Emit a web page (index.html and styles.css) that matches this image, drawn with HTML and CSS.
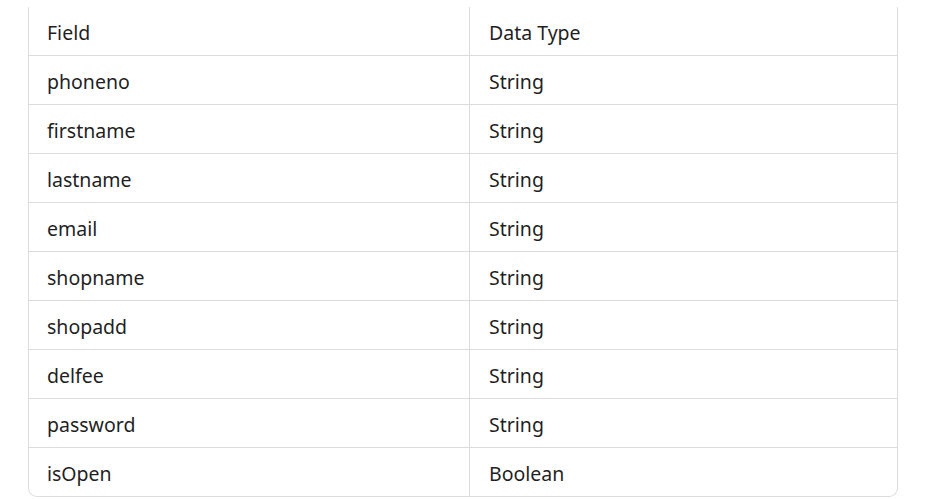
FILE: index.html
```html
<!DOCTYPE html>
<html>
<head>
<meta charset="utf-8">
<link rel="stylesheet" href="styles.css">
</head>
<body>
<div class="wrap">
<table class="tbl">
<thead>
<tr><th class="c1">Field</th><th>Data Type</th></tr>
</thead>
<tbody>
<tr><td class="c1">phoneno</td><td>String</td></tr>
<tr><td class="c1">firstname</td><td>String</td></tr>
<tr><td class="c1">lastname</td><td>String</td></tr>
<tr><td class="c1">email</td><td>String</td></tr>
<tr><td class="c1">shopname</td><td>String</td></tr>
<tr><td class="c1">shopadd</td><td>String</td></tr>
<tr><td class="c1">delfee</td><td>String</td></tr>
<tr><td class="c1">password</td><td>String</td></tr>
<tr><td class="c1">isOpen</td><td>Boolean</td></tr>
</tbody>
</table>
</div>
</body>
</html>
```
FILE: styles.css
```css
html, body {
  margin: 0;
  padding: 0;
  background: #ffffff;
}
body {
  padding: 7px 29px 0 28px;
  font-family: "Noto Sans", "Open Sans", sans-serif;
  color: #1f1f1f;
}
.wrap {
  border: 1px solid #dcdcdc;
  border-top: none;
  border-radius: 0 0 9px 9px;
  overflow: hidden;
}
.tbl {
  width: 100%;
  border-collapse: separate;
  border-spacing: 0;
  font-size: 19.5px;
}
.tbl th, .tbl td {
  height: 48px;
  padding: 3px 0 0 19px;
  text-align: left;
  font-weight: 400;
  vertical-align: middle;
  box-sizing: border-box;
}
.tbl td {
  height: 49px;
  border-top: 1px solid #dcdcdc;
}
.tbl .c1 {
  width: 441px;
  padding-left: 18px;
  border-right: 1px solid #dcdcdc;
}
```
